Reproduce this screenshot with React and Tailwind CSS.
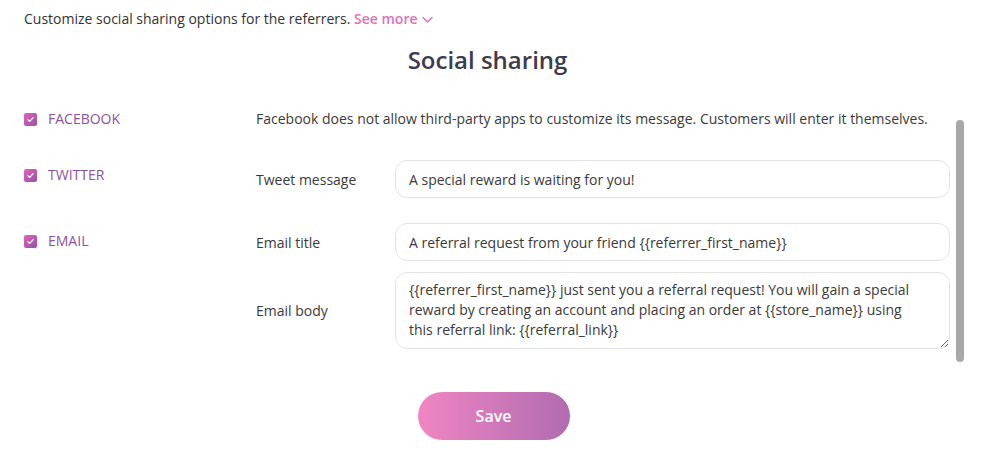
import React from 'react';

function Check() {
    return (
        <span className="flex h-[13px] w-[13px] items-center justify-center rounded-[2px] bg-gradient-to-br from-[#e064b8] to-[#9a4fa8]">
            <svg width="9" height="9" viewBox="0 0 10 10" fill="none">
                <path d="M2 5.2 4.1 7.2 8 2.8" stroke="white" strokeWidth="1.3" strokeLinecap="round" strokeLinejoin="round" />
            </svg>
        </span>
    );
}

function Channel({ label }) {
    return (
        <div className="flex items-center gap-[11px] pl-6">
            <Check />
            <span className="text-[14px] leading-[18px] text-[#8c52a0]">{label}</span>
        </div>
    );
}

const inputClass =
    'w-full rounded-xl border border-[#e3e3e3] bg-white px-[13px] text-[14px] text-[#3a3a3a] outline-none';

export default function App() {
    return (
        <div className="h-[453px] w-[987px] overflow-hidden bg-white font-['Open_Sans',sans-serif] text-[#333]">
            <p className="pl-6 pt-[10px] text-[14px] leading-[18px] text-[#333]">
                Customize social sharing options for the referrers.{' '}
                <span className="font-semibold text-[#e070b8]">See more</span>
                <svg className="ml-1 inline-block align-middle" width="11" height="8" viewBox="0 0 11 8" fill="none">
                    <path d="M1 1.5 5.5 6 10 1.5" stroke="#e070b8" strokeWidth="1.4" strokeLinecap="round" strokeLinejoin="round" />
                </svg>
            </p>

            <h2 className="mt-[17px] pr-3 text-center text-[24px] font-semibold leading-[30px] text-[#3c3c4c]">Social sharing</h2>

            <div className="mt-[21px] flex">
                <div className="flex-1 pt-[14px]">
                    {/* facebook */}
                    <div className="grid grid-cols-[256px_1fr]">
                        <Channel label="FACEBOOK" />
                        <p className="text-[14px] leading-[18px] text-[#3a3a3a]">
                            Facebook does not allow third-party apps to customize its message. Customers will enter it themselves.
                        </p>
                    </div>

                    {/* twitter */}
                    <div className="mt-[32px] grid grid-cols-[256px_139px_1fr]">
                        <div className="pt-[6px]">
                            <Channel label="TWITTER" />
                        </div>
                        <span className="self-center text-[14px] text-[#3a3a3a]">Tweet message</span>
                        <input className={`${inputClass} h-[38px]`} defaultValue="A special reward is waiting for you!" />
                    </div>

                    {/* email */}
                    <div className="mt-[25px] grid grid-cols-[256px_139px_1fr] gap-y-[11px]">
                        <div className="pt-[9px]">
                            <Channel label="EMAIL" />
                        </div>
                        <span className="self-center text-[14px] text-[#3a3a3a]">Email title</span>
                        <input
                            className={`${inputClass} h-[38px]`}
                            defaultValue="A referral request from your friend {{referrer_first_name}}"
                        />
                        <div />
                        <span className="self-center text-[14px] text-[#3a3a3a]">Email body</span>
                        <textarea
                            className={`${inputClass} block h-[77px] resize-y py-[7px] pr-[34px] leading-[20px]`}
                            defaultValue="{{referrer_first_name}} just sent you a referral request! You will gain a special reward by creating an account and placing an order at {{store_name}} using this referral link: {{referral_link}}"
                        />
                    </div>
                </div>

                {/* scrollbar */}
                <div className="ml-[6px] mr-[23px] mt-[24px] h-[242px] w-[8px] rounded-full bg-[#a8a8a8]" />
            </div>

            <div className="mt-[30px] flex justify-center">
                <button className="h-[48px] w-[152px] rounded-full bg-gradient-to-r from-[#f185c3] to-[#b06cb0] text-[16px] font-semibold text-white">
                    Save
                </button>
            </div>
        </div>
    );
}
